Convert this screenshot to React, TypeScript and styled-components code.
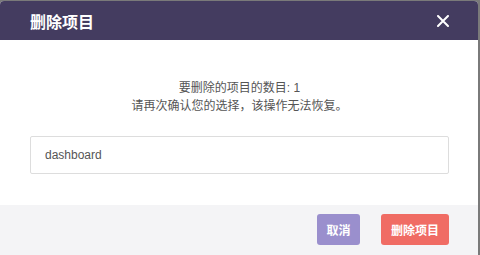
import React from 'react';
import styled, { createGlobalStyle } from 'styled-components';

const GlobalStyle = createGlobalStyle`
  html, body {
    margin: 0;
    padding: 0;
    background: #7a7a7a;
    height: 255px;
    overflow: hidden;
  }
  body {
    font-family: "Liberation Sans", "Noto Sans CJK SC", sans-serif;
  }
`;

const Modal = styled.div`
  width: 478px;
  margin-top: 1px;
  background: #ffffff;
  border-radius: 4px 4px 0 0;
  overflow: hidden;
`;

const Header = styled.div`
  height: 39px;
  background: #443c60;
  display: flex;
  align-items: center;
  justify-content: space-between;
  padding: 0 29px 0 30px;
`;

const Title = styled.h4`
  margin: 0;
  color: #ffffff;
  font-size: 16px;
  font-weight: 700;
  font-family: "Liberation Sans", "Noto Sans CJK SC", sans-serif;
`;

const CloseButton = styled.button`
  border: 0;
  padding: 0;
  background: transparent;
  width: 12px;
  height: 12px;
  display: flex;
  cursor: pointer;
`;

const Body = styled.div`
  padding: 39px 29px 31px 30px;
`;

const Message = styled.p`
  margin: 0 0 21px;
  text-align: center;
  font-size: 12px;
  line-height: 18px;
  color: #555555;
`;

const NameInput = styled.input`
  box-sizing: border-box;
  display: block;
  width: 100%;
  height: 38px;
  border: 1px solid #dddddd;
  border-radius: 2px;
  padding: 0 14px;
  font-size: 12px;
  color: #555555;
  font-family: "Liberation Sans", "Noto Sans CJK SC", sans-serif;
  outline: none;
`;

const Footer = styled.div`
  background: #f4f4f6;
  height: 50px;
  padding: 9px 29px 0 0;
  box-sizing: border-box;
  display: flex;
  justify-content: flex-end;
  align-items: flex-start;
  gap: 21px;
`;

const Button = styled.button<{ $tone: 'cancel' | 'danger' }>`
  height: 31px;
  padding: 0 ${(p) => (p.$tone === 'cancel' ? '9.5px' : '10px')};
  border: 0;
  border-radius: 3px;
  color: #ffffff;
  font-size: 12px;
  font-weight: 700;
  font-family: "Liberation Sans", "Noto Sans CJK SC", sans-serif;
  background: ${(p) => (p.$tone === 'cancel' ? '#9a8fcd' : '#f06c64')};
  cursor: pointer;
`;

export default function App() {
  return (
    <>
      <GlobalStyle />
      <Modal>
        <Header>
          <Title>删除项目</Title>
          <CloseButton aria-label="关闭">
            <svg width="12" height="12" viewBox="0 0 12 12">
              <path d="M1 1 L11 11 M11 1 L1 11" stroke="#ffffff" strokeWidth="2" strokeLinecap="round" />
            </svg>
          </CloseButton>
        </Header>
        <Body>
          <Message>
            要删除的项目的数目: 1
            <br />
            请再次确认您的选择，该操作无法恢复。
          </Message>
          <NameInput defaultValue="dashboard" />
        </Body>
        <Footer>
          <Button $tone="cancel">取消</Button>
          <Button $tone="danger">删除项目</Button>
        </Footer>
      </Modal>
    </>
  );
}
